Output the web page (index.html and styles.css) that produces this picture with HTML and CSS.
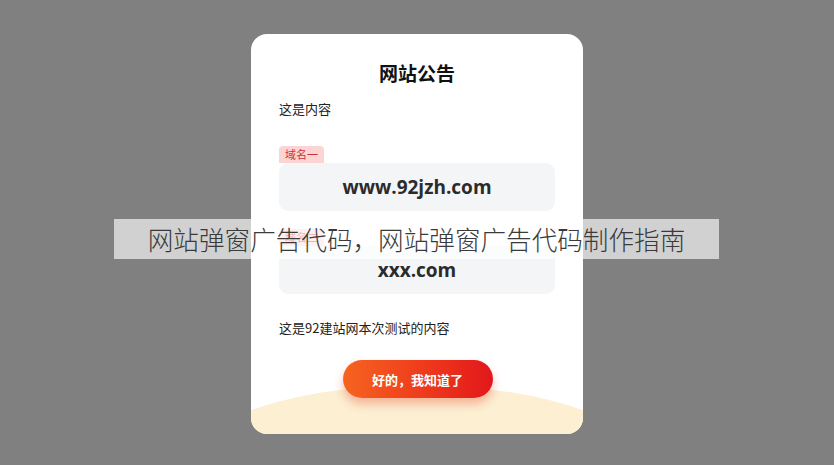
FILE: index.html
```html
<!DOCTYPE html>
<html lang="zh-CN">
<head>
<meta charset="utf-8">
<link rel="stylesheet" href="styles.css">
</head>
<body>
<div class="stage">
  <div class="card">
    <div class="arc"></div>
    <h2 class="title">网站公告</h2>
    <p class="intro">这是内容</p>
    <div class="domain domain-first">
      <span class="tag">域名一</span>
      <div class="box">www.92jzh.com</div>
    </div>
    <div class="domain domain-next">
      <span class="tag">域名二</span>
      <div class="box">xxx.com</div>
    </div>
    <p class="note">这是92建站网本次测试的内容</p>
    <div class="actions"><button class="btn">好的，我知道了</button></div>
  </div>
  <div class="banner">网站弹窗广告代码，网站弹窗广告代码制作指南</div>
</div>
</body>
</html>
```
FILE: styles.css
```css
html, body {
  margin: 0;
  padding: 0;
  background: #808080;
  font-family: "Noto Sans CJK SC", "Noto Sans", sans-serif;
}
.stage {
  position: relative;
  width: 834px;
  height: 465px;
  display: flex;
  justify-content: center;
  padding-top: 34px;
  box-sizing: border-box;
}
.card {
  position: relative;
  width: 332px;
  height: 400px;
  background: #fff;
  border-radius: 16px;
  overflow: hidden;
  padding: 0 28px;
  box-sizing: border-box;
  display: flex;
  flex-direction: column;
}
.arc {
  position: absolute;
  left: -84px;
  top: 351px;
  width: 500px;
  height: 200px;
  border-radius: 50%;
  background: #fcefd2;
}
.title {
  position: relative;
  margin: 26px 0 0;
  text-align: center;
  font-size: 19px;
  font-weight: 700;
  line-height: 26px;
  color: #111;
}
.intro {
  position: relative;
  margin: 14px 0 0;
  font-size: 13px;
  line-height: 18px;
  color: #222;
}
.domain {
  position: relative;
  display: flex;
  flex-direction: column;
  align-items: flex-start;
}
.domain-first { margin-top: 28px; }
.domain-next { margin-top: 18px; }
.tag {
  background: #fdd4d4;
  color: #c8323a;
  font-size: 11px;
  line-height: 17px;
  padding: 0 6px;
  border-radius: 4px 4px 0 0;
}
.box {
  align-self: stretch;
  height: 48px;
  background: #f4f5f7;
  border-radius: 9px;
  display: flex;
  align-items: center;
  justify-content: center;
  font-family: "Open Sans", "Noto Sans", sans-serif;
  font-weight: 700;
  font-size: 19px;
  color: #2b2b2b;
}
.note {
  position: relative;
  margin: 25px 0 0;
  font-size: 13px;
  line-height: 18px;
  color: #222;
}
.actions {
  position: relative;
  display: flex;
  justify-content: center;
  margin-top: 23px;
}
.btn {
  width: 150px;
  height: 38px;
  border: 0;
  border-radius: 19px;
  background: linear-gradient(90deg, #f66420 0%, #ee3a1c 55%, #e2171b 100%);
  color: #fff;
  font-family: "Noto Sans CJK SC", sans-serif;
  font-weight: 700;
  font-size: 13px;
  box-shadow: 0 6px 10px rgba(235, 70, 40, 0.35);
  margin-left: 1px;
}
.banner {
  position: absolute;
  left: 114px;
  top: 219px;
  width: 605px;
  height: 40px;
  background: rgba(255, 255, 255, 0.64);
  color: #3a3a3a;
  font-size: 25.6px;
  font-weight: 300;
  line-height: 40px;
  text-align: center;
  white-space: nowrap;
}
```
